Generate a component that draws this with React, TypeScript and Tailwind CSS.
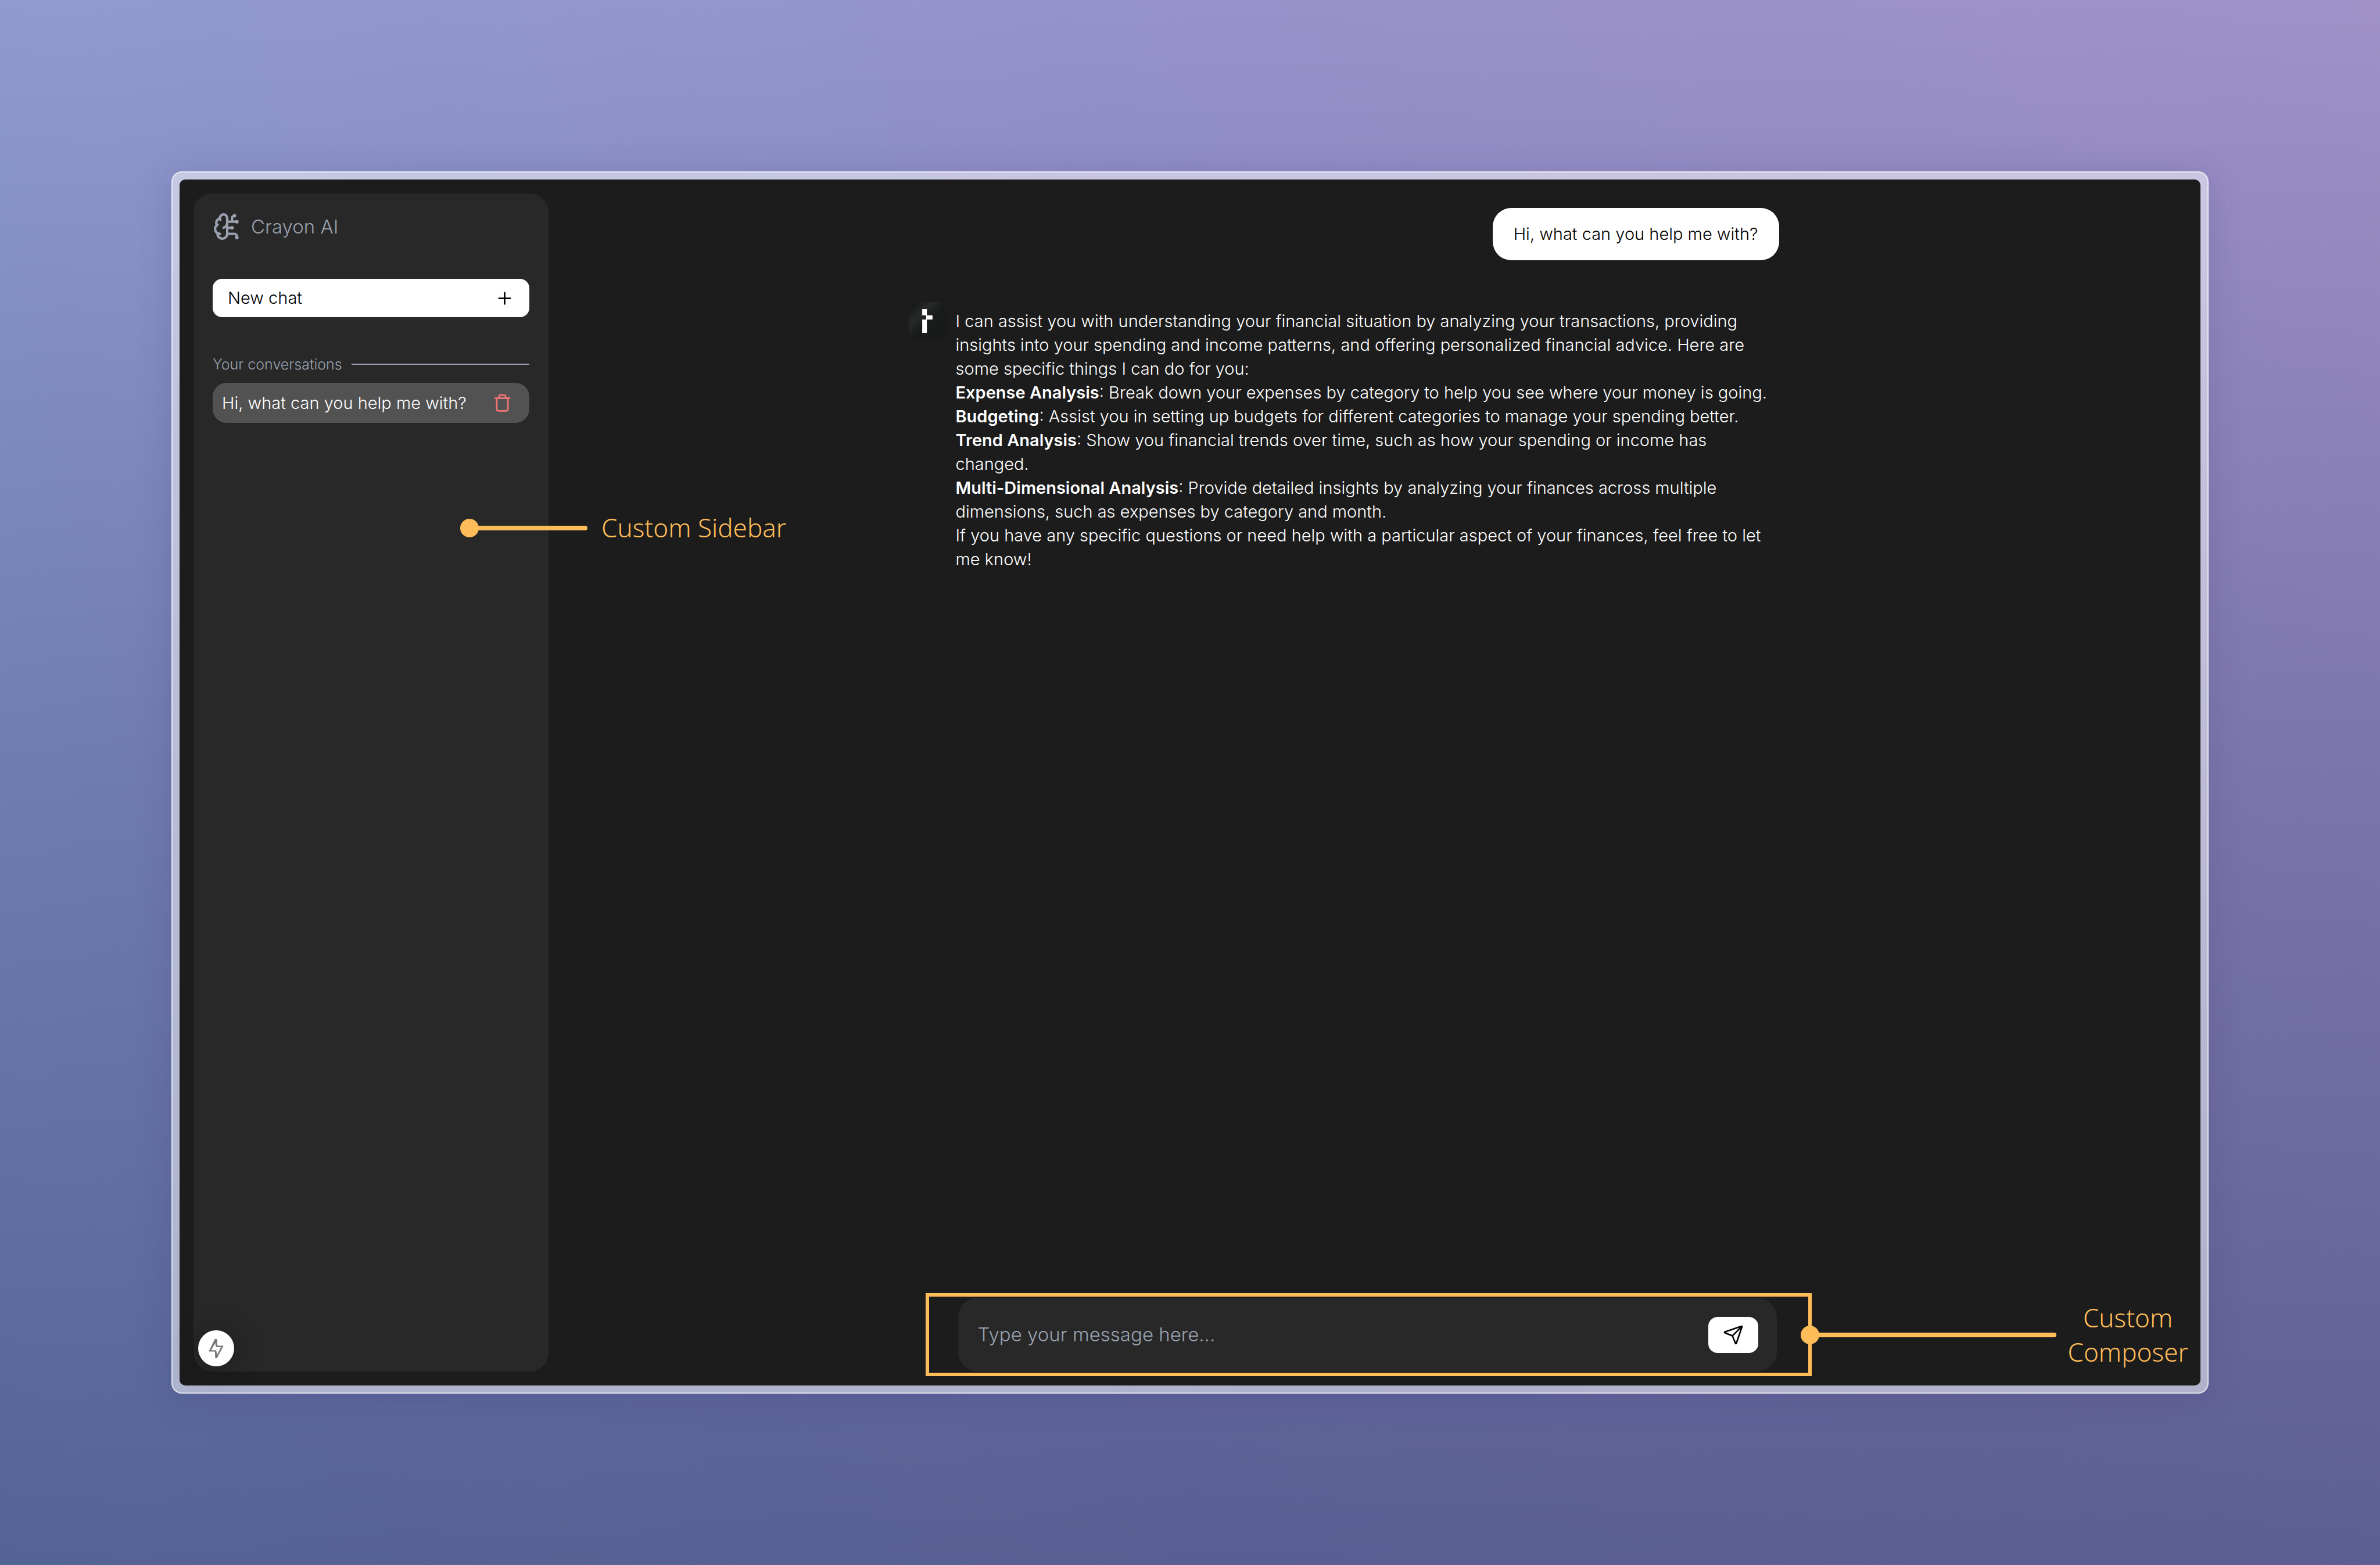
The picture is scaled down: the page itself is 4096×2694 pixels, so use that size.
import React from "react";
import { BrainCircuit, Plus, Send, Trash } from "lucide-react";

const points = [
  {
    title: "Expense Analysis",
    text: "Break down your expenses by category to help you see where your money is going.",
  },
  {
    title: "Budgeting",
    text: "Assist you in setting up budgets for different categories to manage your spending better.",
  },
  {
    title: "Trend Analysis",
    text: "Show you financial trends over time, such as how your spending or income has changed.",
  },
  {
    title: "Multi-Dimensional Analysis",
    text: "Provide detailed insights by analyzing your finances across multiple dimensions, such as expenses by category and month.",
  },
];

function Pointer({ lineClass }: { lineClass: string }) {
  return (
    <span className="flex shrink-0 items-center" aria-hidden="true">
      <span className="size-8 rounded-full bg-[#ffbd59]" />
      <span className={`-ml-1 h-2 rounded-r-full bg-[#ffbd59] ${lineClass}`} />
    </span>
  );
}

function Sidebar() {
  return (
    <aside className="relative flex w-[611px] shrink-0 flex-col rounded-[32px] bg-[#282828] px-[33px] pt-8">
      <div className="flex items-center gap-4 text-gray-400">
        <BrainCircuit size={50} />
        <h1 className="text-[33px] leading-[50px] font-[350]">Crayon AI</h1>
      </div>

      <button
        type="button"
        className="mt-[65px] flex h-[66px] items-center justify-between rounded-2xl bg-white px-[26px] text-[29px] font-[350] text-black"
      >
        New chat
        <Plus size={33} />
      </button>

      <div className="mt-[63px] flex items-center gap-4">
        <h2 className="text-[25px] leading-9 font-[350] text-gray-400">Your conversations</h2>
        <div className="h-0.5 flex-1 bg-gray-400" />
      </div>

      <div className="mt-3.5 flex h-[69px] items-center justify-between rounded-3xl bg-[#525252] pr-[30px] pl-4">
        <a href="#conversation" className="text-[29px] font-[350] text-white">
          Hi, what can you help me with?
        </a>
        <button type="button" aria-label="Delete conversation" className="text-[#f47575]">
          <Trash size={33} />
        </button>
      </div>

      <div className="absolute top-[546px] left-[459px] z-10 flex items-center gap-6">
        <Pointer lineClass="w-[191px]" />
        <span className="font-['Noto_Sans',sans-serif] text-[44px] leading-[59px] font-light whitespace-nowrap text-[#ffbd59]">
          Custom Sidebar
        </span>
      </div>

      <button
        type="button"
        aria-label="Developer tools"
        className="absolute bottom-[9px] left-2 flex size-[62px] items-center justify-center rounded-full bg-white shadow-[0_4px_48px_rgba(0,0,0,0.35)]"
      >
        <svg viewBox="260 127 95 123" className="h-[33px] w-[26px]" fill="#767676" fillRule="evenodd">
          <path d="M299 127H313L315 165Q315 170 320 170H355L313 250H301L300 212Q300 207 295 207H260ZM302 152L276 199H301Q309 199 310 207L313 230L338 179H314Q305 179 304 170Z" />
        </svg>
      </button>
    </aside>
  );
}

function Avatar() {
  return (
    <div className="flex size-[65px] shrink-0 items-center justify-center rounded-[18px] bg-[linear-gradient(135deg,#191b1b_10%,#262829_32%,#191b1b_52%,#181a1a)]">
      <svg viewBox="0 0 66 152" className="h-[41px] w-[18px]" fill="#fff">
        <path d="M0 0H30V40H66V67H30V152H0V67H25V40H0Z" />
      </svg>
    </div>
  );
}

function Composer() {
  return (
    <form
      className="relative mr-[110px] mb-6 ml-[85px] flex h-[127px] items-center rounded-[34px] bg-[#282828] pr-8 pl-[34px]"
      onSubmit={(e) => e.preventDefault()}
    >
      <input
        type="text"
        aria-label="Message"
        placeholder="Type your message here..."
        className="min-w-0 flex-1 bg-transparent text-[33px] font-[350] text-white outline-none placeholder:text-gray-400"
      />
      <button
        type="submit"
        aria-label="Send"
        className="flex h-[62px] w-[86px] items-center justify-center rounded-2xl bg-white text-black"
      >
        <Send size={36} strokeWidth={1.75} />
      </button>

      <div className="pointer-events-none absolute -inset-y-2 -right-[60px] -left-14 border-6 border-[#ffbd59]">
        <div className="absolute top-1/2 left-full -ml-[13px] flex -translate-y-1/2 items-center gap-5">
          <Pointer lineClass="w-[412px]" />
          <span className="text-center font-['Noto_Sans',sans-serif] text-[44px] leading-[59px] font-light text-[#ffbd59]">
            Custom
            <br />
            Composer
          </span>
        </div>
      </div>
    </form>
  );
}

function Chat() {
  return (
    <main className="flex min-w-0 flex-1 flex-col items-center">
      <div className="flex w-full max-w-[1604px] flex-1 flex-col">
        <div className="mr-[106px] flex flex-1 flex-col gap-[72px] pt-[49px]">
          <div className="flex h-[90px] items-center self-end rounded-[32px] bg-white px-9 text-[29px] font-[350] text-black">
            Hi, what can you help me with?
          </div>

          <div className="flex gap-4">
            <Avatar />
            <div className="flex-1 pt-3 text-[29px] leading-[41px] font-[350] text-white">
              <p>
                I can assist you with understanding your financial situation by analyzing your
                transactions, providing insights into your spending and income patterns, and offering
                personalized financial advice. Here are some specific things I can do for you:
              </p>
              <ul>
                {points.map((point) => (
                  <li key={point.title}>
                    <strong className="font-semibold">{point.title}</strong>: {point.text}
                  </li>
                ))}
              </ul>
              <p>
                If you have any specific questions or need help with a particular aspect of your
                finances, feel free to let me know!
              </p>
            </div>
          </div>
        </div>
        <Composer />
      </div>
    </main>
  );
}

export default function App() {
  return (
    <div className="flex h-screen bg-[linear-gradient(to_bottom,rgba(26,44,92,0)_0%,rgba(26,44,92,0.28)_50%,rgba(26,44,92,0.5)_100%),linear-gradient(to_right,#8f9bd0,#9792cb_50%,#a091c9)] p-[295px] font-[Inter,sans-serif]">
      <div className="flex flex-1 rounded-[18px] border-2 border-white/60 bg-white/50 p-3 shadow-[0_8px_60px_rgba(60,50,120,0.2)]">
        <div className="flex flex-1 rounded-[10px] bg-[#1c1c1c]">
          <div className="flex flex-1 pl-6">
            <div className="flex py-6">
              <Sidebar />
            </div>
            <Chat />
          </div>
        </div>
      </div>
    </div>
  );
}
